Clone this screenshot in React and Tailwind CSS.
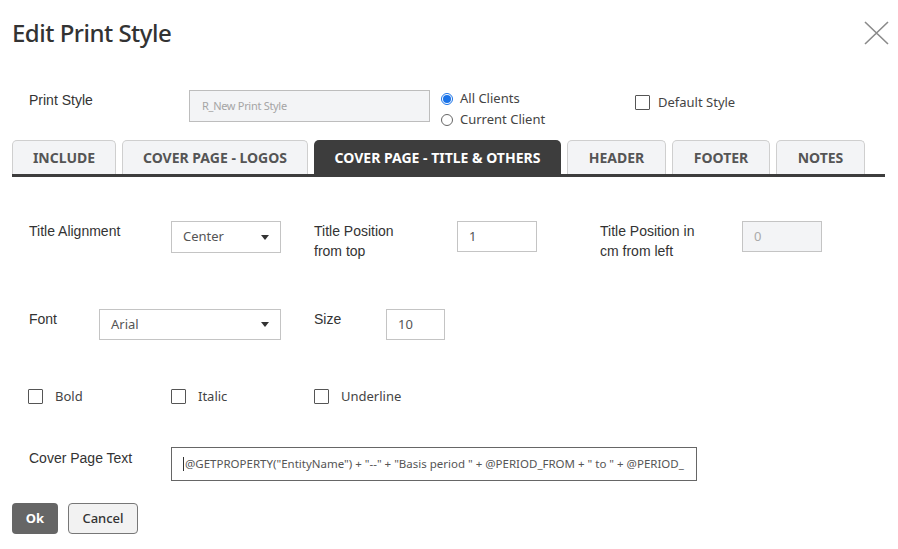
import React from "react";

const label = "font-['Liberation_Sans',Arial,sans-serif] text-[14px] leading-[20px] text-[#333]";

const Caret = () => (
  <svg width="8" height="5" viewBox="0 0 8 5" className="shrink-0">
    <path d="M0 0 L8 0 L4 5 Z" fill="#333" />
  </svg>
);

const Select = ({ value, className }) => (
  <div
    className={`flex h-[32px] items-center justify-between border border-[#c4c4c4] bg-white pl-[11px] pr-[11px] text-[13px] text-[#555] ${className}`}
  >
    <span>{value}</span>
    <Caret />
  </div>
);

const Box = ({ value, disabled, className }) => (
  <div
    className={`flex h-[31px] items-center border border-[#c4c4c4] pl-[11px] text-[13px] ${
      disabled ? "bg-[#f3f4f6] text-[#aaa]" : "bg-white text-[#555]"
    } ${className}`}
  >
    {value}
  </div>
);

const Check = ({ text }) => (
  <div className="flex items-center gap-[12px]">
    <span className="h-[15px] w-[15px] rounded-[1px] border border-[#555] bg-white" />
    <span className="text-[13px] leading-[15px] text-[#444]">{text}</span>
  </div>
);

const tabs = [
  { name: "INCLUDE", w: "w-[104px]" },
  { name: "COVER PAGE - LOGOS", w: "w-[186px]" },
  { name: "COVER PAGE - TITLE & OTHERS", w: "w-[247px]", active: true },
  { name: "HEADER", w: "w-[99px]" },
  { name: "FOOTER", w: "w-[98px]" },
  { name: "NOTES", w: "w-[89px]" },
];

export default function App() {
  return (
    <div className="h-[549px] w-[898px] overflow-hidden bg-white font-['Noto_Sans',sans-serif] text-[#333]">
      {/* header */}
      <div className="flex items-start justify-between pl-[12px] pr-[9px] pt-[17px]">
        <h1 className="text-[24px] font-medium leading-[32px] tracking-[-0.5px] text-[#333]">
          Edit Print Style
        </h1>
        <svg width="25" height="24" viewBox="0 0 25 24" className="mt-[4px]">
          <path d="M1 1 L24 23 M24 1 L1 23" stroke="#8a8a8a" strokeWidth="1.6" fill="none" />
        </svg>
      </div>

      {/* print style row */}
      <div className="mt-[41px] flex h-[40px] items-start pl-[29px]">
        <div className={`${label} w-[160px] pt-0`}>Print Style</div>
        <div className="flex h-[32px] w-[241px] items-center border border-[#bdbdbd] bg-[#f3f4f6] pl-[12px] text-[11px] tracking-[-0.3px] text-[#a5a5a5]">
          R_New Print Style
        </div>
        <div className="ml-[11px] mt-[-2px] flex w-[194px] flex-col text-[13px] text-[#444]">
          <div className="flex h-[21px] items-center gap-[7px]">
            <span className="flex h-[12px] w-[12px] items-center justify-center rounded-full border border-[#1a73e8] bg-white">
              <span className="h-[8px] w-[8px] rounded-full bg-[#1a73e8]" />
            </span>
            <span>All Clients</span>
          </div>
          <div className="flex h-[21px] items-center gap-[7px]">
            <span className="h-[12px] w-[12px] rounded-full border border-[#666] bg-white" />
            <span>Current Client</span>
          </div>
        </div>
        <div className="mt-[5px] flex items-center gap-[8px]">
          <span className="h-[15px] w-[15px] rounded-[1px] border border-[#555] bg-white" />
          <span className="text-[13px] leading-[15px] text-[#444]">Default Style</span>
        </div>
      </div>

      {/* tabs */}
      <div className="mx-[12px] mt-[10px] flex w-[873px] items-end gap-[6px] border-b-[3px] border-[#3d3d3d]">
        {tabs.map((t) => (
          <div
            key={t.name}
            className={`flex h-[34px] items-center justify-center rounded-t-[5px] text-[14px] font-bold ${t.w} ${
              t.active
                ? "bg-[#3d3d3d] text-white"
                : "border border-b-0 border-[#cfcfcf] bg-[#f3f4f6] text-[#555]"
            }`}
          >
            {t.name}
          </div>
        ))}
      </div>

      <div className="pl-[29px]">
        {/* row 1 */}
        <div className="mt-[44px] grid grid-cols-[142px_143px_143px_143px_142px_80px] items-start">
          <div className={label}>Title Alignment</div>
          <Select value="Center" className="w-[110px]" />
          <div className={label}>
            Title Position
            <br />
            from top
          </div>
          <Box value="1" className="w-[80px]" />
          <div className={label}>
            Title Position in
            <br />
            cm from left
          </div>
          <Box value="0" disabled className="w-[80px]" />
        </div>

        {/* row 2 */}
        <div className="mt-[48px] flex items-start">
          <div className={`${label} w-[70px]`}>Font</div>
          <Select value="Arial" className="w-[182px] !h-[31px]" />
          <div className={`${label} ml-[33px] w-[72px]`}>Size</div>
          <Box value="10" className="w-[59px]" />
        </div>

        {/* row 3 */}
        <div className="ml-[-1px] mt-[49px] grid grid-cols-[143px_143px_143px]">
          <Check text="Bold" />
          <Check text="Italic" />
          <Check text="Underline" />
        </div>

        {/* row 4 */}
        <div className="mt-[43px] flex items-start">
          <div className={`${label} w-[142px] pt-[1px]`}>Cover Page Text</div>
          <div className="flex h-[34px] w-[526px] items-center overflow-hidden whitespace-nowrap border-[1.5px] border-[#666] bg-white pl-[11px] text-[11.5px] text-[#555]">
            <span className="mr-[1px] h-[14px] w-[1px] bg-[#333]" />
            @GETPROPERTY("EntityName") + "--" + "Basis period " + @PERIOD_FROM + " to " + @PERIOD_
          </div>
        </div>
      </div>

      {/* buttons */}
      <div className="ml-[12px] mt-[22px] flex items-center gap-[10px]">
        <button className="h-[31px] w-[46px] rounded-[4px] bg-[#666] text-[13px] font-bold text-white">
          Ok
        </button>
        <button className="h-[31px] w-[70px] rounded-[4px] border border-[#777] bg-[#f2f2f2] text-[13px] font-medium text-[#333]">
          Cancel
        </button>
      </div>
    </div>
  );
}
